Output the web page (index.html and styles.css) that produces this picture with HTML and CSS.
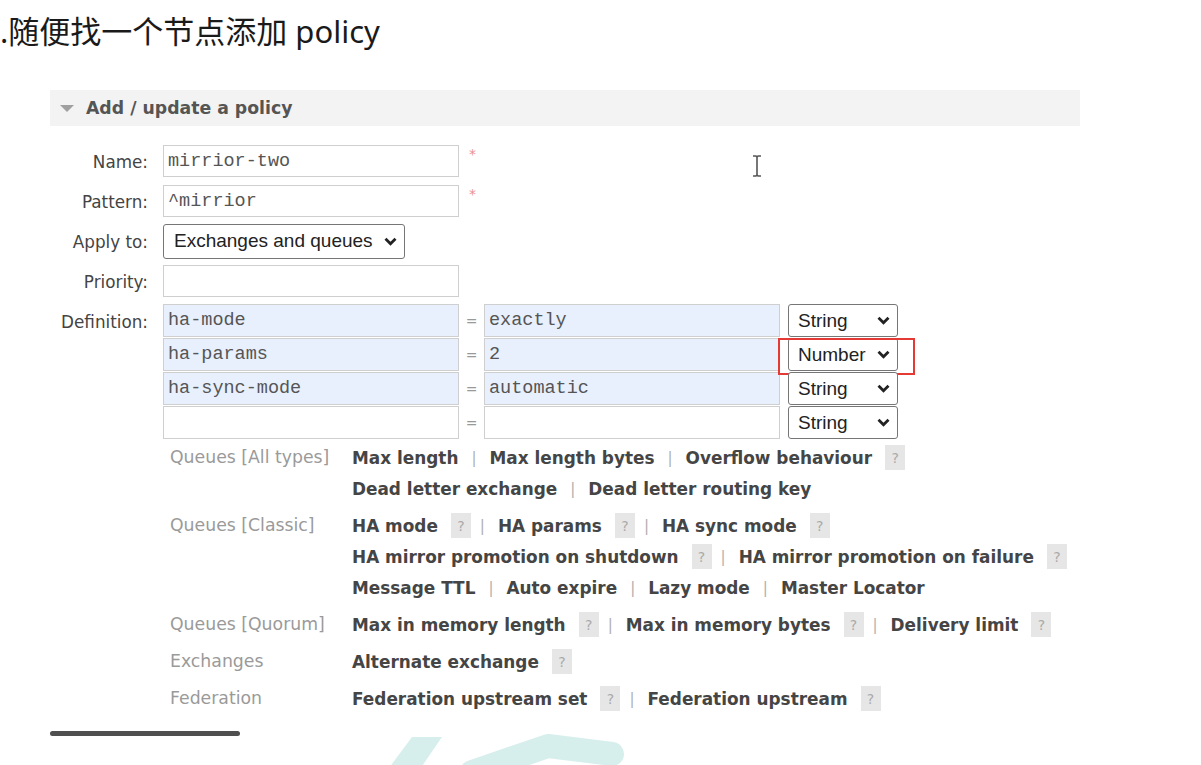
FILE: index.html
```html
<!DOCTYPE html>
<html lang="zh">
<head>
<meta charset="utf-8">
<title>Add / update a policy</title>
<link rel="stylesheet" href="styles.css">
</head>
<body>
<h1 class="title">.随便找一个节点添加 policy</h1>
<section class="panel">
  <div class="panel-head"><span class="tri"></span><span class="head-text">Add / update a policy</span></div>
  <svg class="cursor" width="12" height="24" viewBox="0 0 12 24"><path d="M2 2h3l1 1 1-1h3M6 3v18M2 22h3l1-1 1 1h3" fill="none" stroke="#555" stroke-width="1.6"/></svg>
  <div class="form">
    <label class="lbl">Name:</label>
    <div class="ctl"><input class="txt" value="mirrior-two"><span class="req">*</span></div>
    <label class="lbl">Pattern:</label>
    <div class="ctl"><input class="txt" value="^mirrior"><span class="req">*</span></div>
    <label class="lbl">Apply to:</label>
    <div class="ctl"><div class="sel sel-apply"><span>Exchanges and queues</span><svg class="chev" width="13" height="9" viewBox="0 0 13 9"><path d="M1.5 1.8 6.5 6.8l5-5" fill="none" stroke="#222" stroke-width="2.8"/></svg></div></div>
    <label class="lbl">Priority:</label>
    <div class="ctl"><input class="txt" value=""></div>
    <label class="lbl lbl-def">Definition:</label>
    <div class="defs">
      <div class="def-row">
        <input class="txt key filled" value="ha-mode"><span class="eq">=</span><input class="txt val filled" value="exactly">
        <div class="sel sel-type"><span>String</span><svg class="chev" width="13" height="9" viewBox="0 0 13 9"><path d="M1.5 1.8 6.5 6.8l5-5" fill="none" stroke="#222" stroke-width="2.8"/></svg></div>
      </div>
      <div class="def-row">
        <input class="txt key filled" value="ha-params"><span class="eq">=</span><input class="txt val filled" value="2">
        <div class="sel sel-type marked"><span>Number</span><svg class="chev" width="13" height="9" viewBox="0 0 13 9"><path d="M1.5 1.8 6.5 6.8l5-5" fill="none" stroke="#222" stroke-width="2.8"/></svg><span class="mark"></span></div>
      </div>
      <div class="def-row">
        <input class="txt key filled" value="ha-sync-mode"><span class="eq">=</span><input class="txt val filled" value="automatic">
        <div class="sel sel-type"><span>String</span><svg class="chev" width="13" height="9" viewBox="0 0 13 9"><path d="M1.5 1.8 6.5 6.8l5-5" fill="none" stroke="#222" stroke-width="2.8"/></svg></div>
      </div>
      <div class="def-row">
        <input class="txt key" value=""><span class="eq">=</span><input class="txt val" value="">
        <div class="sel sel-type"><span>String</span><svg class="chev" width="13" height="9" viewBox="0 0 13 9"><path d="M1.5 1.8 6.5 6.8l5-5" fill="none" stroke="#222" stroke-width="2.8"/></svg></div>
      </div>
    </div>
  </div>

  <div class="help">
    <div class="h-lbl">Queues [All types]</div>
    <div class="h-links">
      <div class="line"><b>Max length</b><i class="sep">|</i><b>Max length bytes</b><i class="sep">|</i><b>Overflow behaviour</b><span class="q">?</span></div>
      <div class="line"><b>Dead letter exchange</b><i class="sep">|</i><b>Dead letter routing key</b></div>
    </div>
    <div class="h-lbl">Queues [Classic]</div>
    <div class="h-links">
      <div class="line"><b>HA mode</b><span class="q">?</span><i class="sep sep-q">|</i><b>HA params</b><span class="q">?</span><i class="sep sep-q">|</i><b>HA sync mode</b><span class="q">?</span></div>
      <div class="line"><b>HA mirror promotion on shutdown</b><span class="q">?</span><i class="sep sep-q">|</i><b>HA mirror promotion on failure</b><span class="q">?</span></div>
      <div class="line"><b>Message TTL</b><i class="sep">|</i><b>Auto expire</b><i class="sep">|</i><b>Lazy mode</b><i class="sep">|</i><b>Master Locator</b></div>
    </div>
    <div class="h-lbl">Queues [Quorum]</div>
    <div class="h-links">
      <div class="line"><b>Max in memory length</b><span class="q">?</span><i class="sep sep-q">|</i><b>Max in memory bytes</b><span class="q">?</span><i class="sep sep-q">|</i><b>Delivery limit</b><span class="q">?</span></div>
    </div>
    <div class="h-lbl">Exchanges</div>
    <div class="h-links">
      <div class="line"><b>Alternate exchange</b><span class="q">?</span></div>
    </div>
    <div class="h-lbl">Federation</div>
    <div class="h-links">
      <div class="line"><b>Federation upstream set</b><span class="q">?</span><i class="sep sep-q">|</i><b>Federation upstream</b><span class="q">?</span></div>
    </div>
  </div>

  <div class="bottom">
    <div class="btn-edge"></div>
    <svg class="watermark" width="270" height="33" viewBox="0 0 270 33">
      <polygon points="32,5 62,5 38,40 6,40" fill="#d7efec"/>
      <path d="M92 40 L168 14 L232 22" fill="none" stroke="#d7efec" stroke-width="24" stroke-linejoin="round" stroke-linecap="round"/>
    </svg>
  </div>
</section>
</body>
</html>
```

FILE: styles.css
```css
html, body {
  margin: 0;
  padding: 0;
  background: #ffffff;
}

body {
  width: 1201px;
  height: 765px;
  overflow: hidden;
  font-family: "DejaVu Sans", Verdana, sans-serif;
  color: #444;
}

.title {
  margin: 0;
  padding: 11px 0 0 0;
  height: 40px;
  line-height: 40px;
  font-family: "Noto Sans", "Noto Sans CJK SC", sans-serif;
  font-size: 31px;
  font-weight: 400;
  color: #1a1a1a;
  white-space: nowrap;
}

.panel {
  position: relative;
  margin: 39px 0 0 50px;
  width: 1030px;
}

.panel-head {
  height: 36px;
  background: #f3f3f3;
  display: flex;
  align-items: center;
  padding-left: 10px;
}

.tri {
  width: 0;
  height: 0;
  border-left: 7px solid transparent;
  border-right: 7px solid transparent;
  border-top: 7px solid #a0a0a0;
  margin-right: 12px;
  margin-top: 1px;
}

.head-text {
  font-weight: bold;
  font-size: 17.3px;
  color: #555;
}

.cursor {
  position: absolute;
  left: 701px;
  top: 64px;
}

.form {
  display: grid;
  grid-template-columns: 98px 1fr;
  grid-template-rows: repeat(4, 40px) auto;
  column-gap: 15px;
  padding-top: 15px;
}

.lbl {
  align-self: center;
  margin-top: 2px;
  text-align: right;
  font-size: 16.8px;
  color: #444;
  white-space: nowrap;
}

.lbl-def {
  align-self: start;
  margin-top: 5px;
  line-height: 33px;
}

.ctl {
  display: flex;
  align-items: center;
}

.txt {
  box-sizing: border-box;
  width: 296px;
  height: 32px;
  margin: 0;
  padding: 0 4px;
  border: 1px solid #cfcfcf;
  border-radius: 0;
  background: #fff;
  font-family: "Liberation Mono", "Courier New", monospace;
  font-size: 18.5px;
  color: #555;
  outline: none;
}

.req {
  align-self: flex-start;
  margin: 5px 0 0 10px;
  font-size: 14px;
  color: #ec8f8f;
}

.sel {
  position: relative;
  box-sizing: border-box;
  display: flex;
  align-items: center;
  justify-content: space-between;
  border: 1px solid #767676;
  border-radius: 3px;
  background: #fff;
  font-family: "Liberation Sans", Arial, sans-serif;
  font-size: 19px;
  color: #222;
}

.sel-apply {
  width: 242px;
  height: 35px;
  padding: 0 7px 0 10px;
}

.sel-type {
  width: 110px;
  height: 33px;
  padding: 0 7px 0 9px;
  margin-left: 8px;
}

.chev {
  flex: none;
}

.mark {
  position: absolute;
  left: -11px;
  top: -1px;
  width: 133px;
  height: 33px;
  border: 2px solid #e53935;
}

.defs {
  margin-top: 3px;
  display: flex;
  flex-direction: column;
  gap: 1px;
}

.def-row {
  display: flex;
  align-items: center;
  height: 33px;
}

.def-row .txt {
  height: 33px;
}

.txt.filled {
  background: #e8f0fd;
}

.eq {
  width: 25px;
  text-align: center;
  font-size: 14px;
  color: #999;
}

.help {
  display: grid;
  grid-template-columns: 182px 1fr;
  row-gap: 6px;
  padding-left: 120px;
  margin-top: 3px;
}

.h-lbl {
  font-size: 17.3px;
  line-height: 31px;
  color: #9a9a9a;
  white-space: nowrap;
}

.h-links {
  display: flex;
  flex-direction: column;
}

.line {
  display: flex;
  align-items: center;
  height: 31px;
  white-space: nowrap;
}

.line b {
  font-weight: bold;
  font-size: 16.9px;
  color: #454545;
}

.sep {
  font-style: normal;
  font-size: 15px;
  color: #b0b0b0;
  padding: 0 13px;
}

.sep-q {
  padding-left: 9px;
}

.q {
  display: inline-flex;
  align-items: center;
  justify-content: center;
  width: 20px;
  height: 25px;
  margin-left: 13px;
  background: #e6e6e6;
  font-size: 14px;
  color: #aaa;
}

.bottom {
  display: flex;
  align-items: flex-start;
  margin-top: 17px;
}

.btn-edge {
  width: 190px;
  height: 5px;
  border-radius: 3px;
  background: #4f4f4f;
}

.watermark {
  margin-left: 140px;
  margin-top: 1px;
}
```
